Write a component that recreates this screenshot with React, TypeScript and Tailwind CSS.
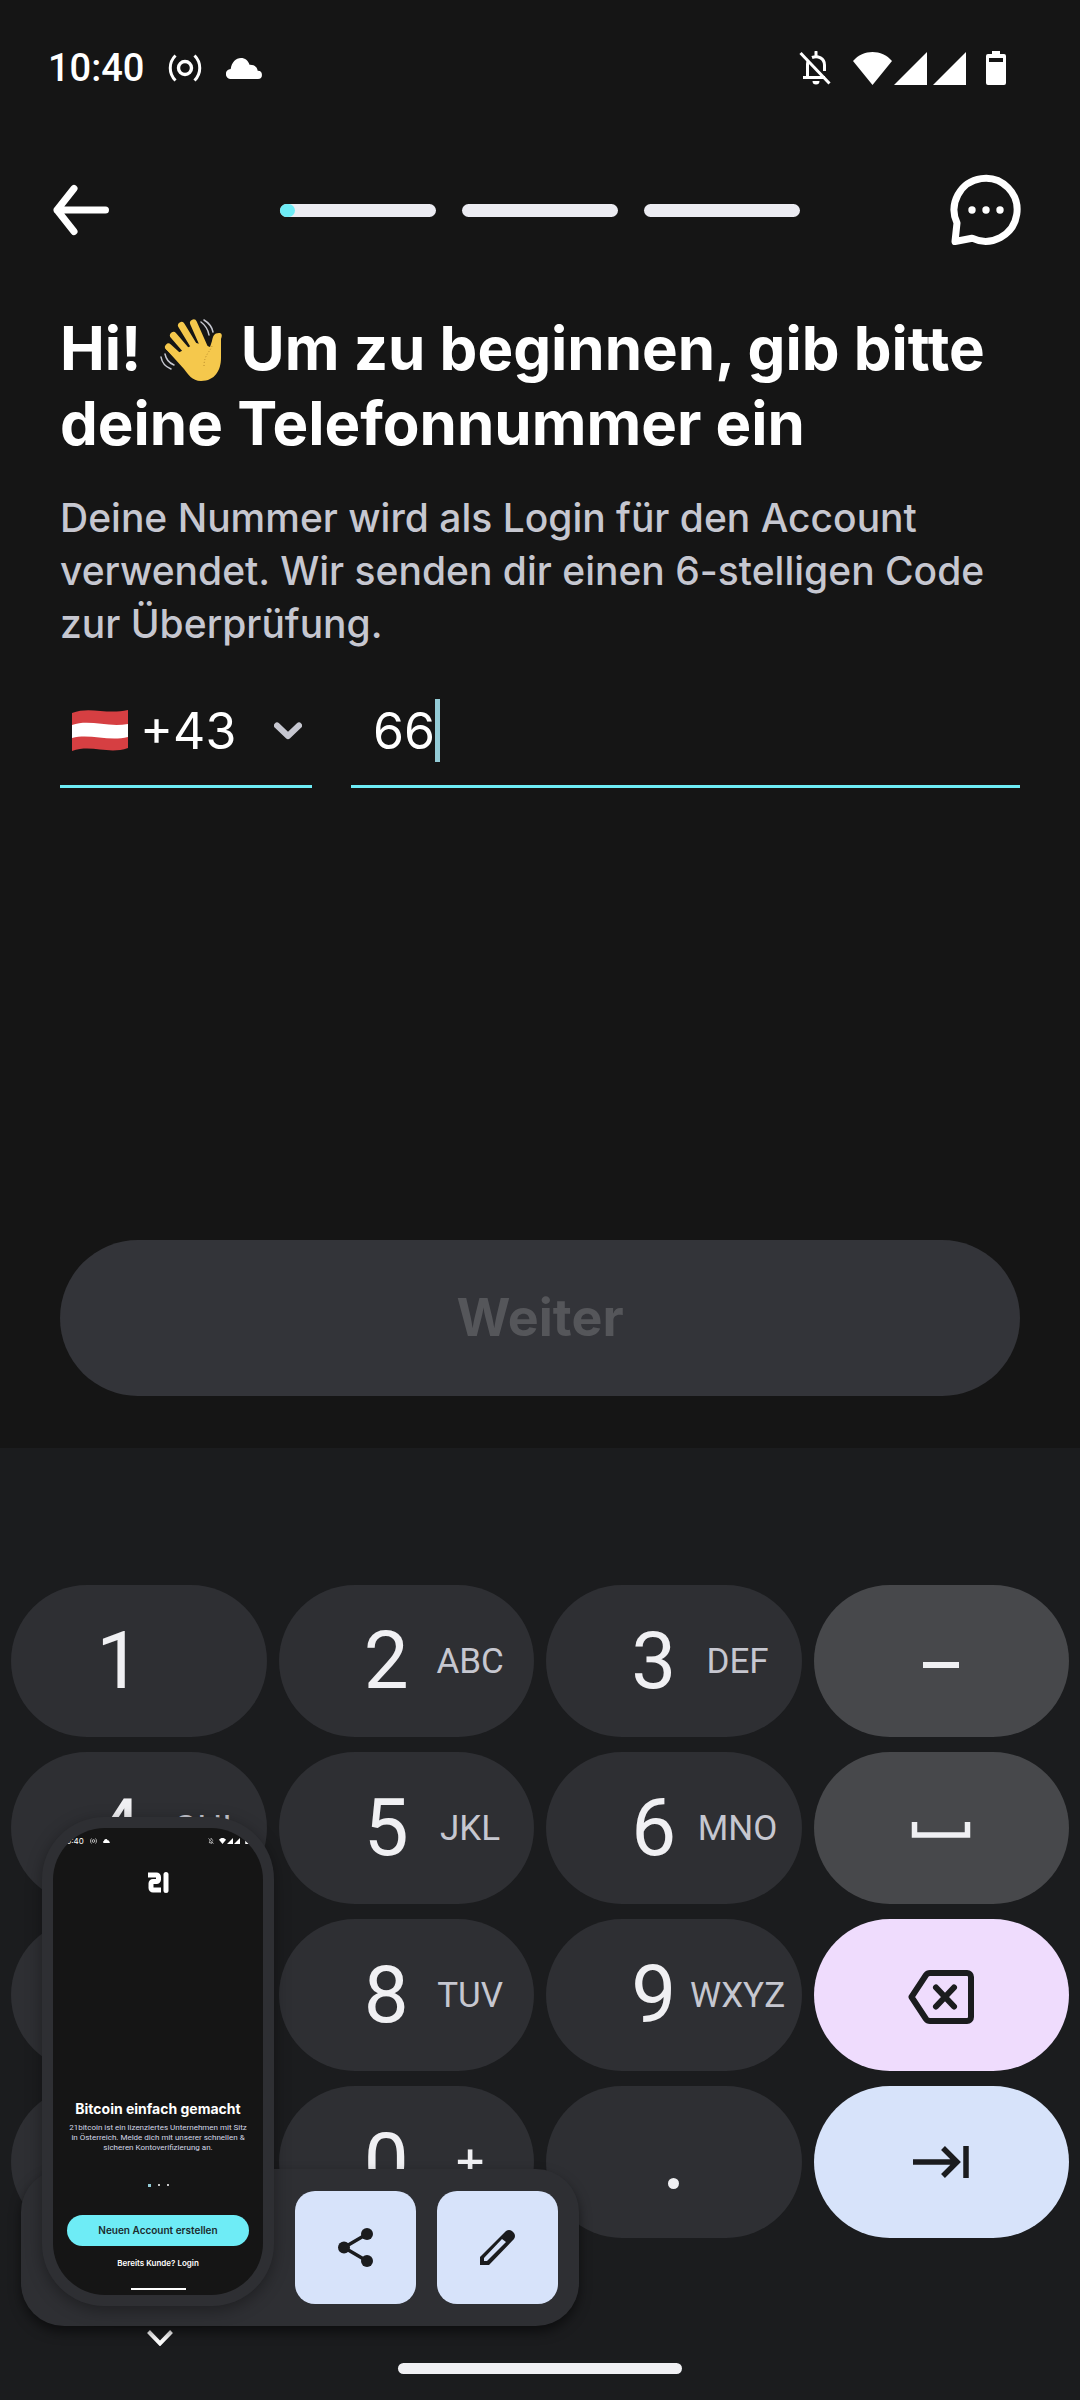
import { useState, type ReactNode } from 'react';

const FONT = "font-['Inter','Noto_Sans',sans-serif]";

interface KeyData {
  digit: string;
  letters?: string;
}

const KEY_ROWS: KeyData[][] = [
  [{ digit: '1' }, { digit: '2', letters: 'ABC' }, { digit: '3', letters: 'DEF' }],
  [{ digit: '4', letters: 'GHI' }, { digit: '5', letters: 'JKL' }, { digit: '6', letters: 'MNO' }],
  [{ digit: '' }, { digit: '8', letters: 'TUV' }, { digit: '9', letters: 'WXYZ' }],
];

function CastIcon({ className }: { className: string }) {
  return (
    <svg viewBox="0 0 34 28" className={className} fill="none" stroke="currentColor" aria-hidden="true">
      <circle cx="17" cy="14" r="6.5" strokeWidth="3.4" />
      <path d="M7.5 1.5C.5 8.500.5 19.500 7.500 26.500M26.500 1.500C33.500 8.500 33.500 19.500 26.500 26.500" strokeWidth="3" />
    </svg>
  );
}

function CloudIcon({ className }: { className: string }) {
  return (
    <svg viewBox="0 0 36 21" className={className} fill="currentColor" aria-hidden="true">
      <path d="M5 21a5 5 0 0 1-.3-10C5.500 4.500 9.800 0 15 0c4 0 7.300 2.500 8.500 6.800 4.500-.3 7.600 2.200 8.200 6A4.100 4.100 0 0 1 32 21Z" />
    </svg>
  );
}

function BellOffIcon({ className }: { className: string }) {
  return (
    <svg viewBox="0 0 32 34" className={className} fill="none" stroke="currentColor" strokeWidth="3" aria-hidden="true">
      <path d="M1.500 2 30.500 32.500" />
      <path d="M8.500 27V13.500c0-1 .2-2 .5-3M4 26.500h22M13 6.500c6-2.500 12.500 1 12.500 7.500v6" />
      <path d="M17 1v4" strokeLinecap="round" />
      <path d="M13.500 30h7a3.500 3.500 0 0 1-7 0Z" fill="currentColor" stroke="none" />
    </svg>
  );
}

function WifiIcon({ className }: { className: string }) {
  return (
    <svg viewBox="0 0 39 33" className={className} fill="currentColor" aria-hidden="true">
      <path d="M19.500 33 0 9C10-3 29-3 39 9Z" />
    </svg>
  );
}

function SignalIcon({ className }: { className: string }) {
  return (
    <svg viewBox="0 0 33 33" className={className} fill="currentColor" aria-hidden="true">
      <path d="M33 0v33H0Z" />
    </svg>
  );
}

function BatteryIcon({ className }: { className: string }) {
  return (
    <svg viewBox="0 0 20 34" className={className} fill="currentColor" aria-hidden="true">
      <path fillRule="evenodd" d="M6 0h8v3h4a2 2 0 0 1 2 2v27a2 2 0 0 1-2 2H2a2 2 0 0 1-2-2V5a2 2 0 0 1 2-2h4ZM3 7v4h14V7Z" />
    </svg>
  );
}

function WavingHand() {
  return (
    <svg viewBox="0 0 63 63" className="mx-1 inline-block size-[63px] align-[-12px]" role="img" aria-label="Winkende Hand">
      <g fill="none" stroke="#f5c84c" strokeLinecap="round" strokeWidth="7">
        <path d="M8.500 28 26 44M13.500 16.500 32 38M21.500 6.500 37 32M33.500 4 45 30" />
      </g>
      <path
        fill="#f5c84c"
        d="M5 29 24 50c4 5 8 12 17 12 14 0 20-11 20-23V20c2-5 0-6-2-6-5 0-6 3-7 8l-2 6-5-2-9-2-18 10Z"
      />
      <path d="M52 27c-2 6-8 9-8 20" fill="none" stroke="#b98c2c" strokeWidth="1" strokeDasharray="1 2" />
      <g fill="none" stroke="#c6c7d0" strokeWidth="1.500" strokeLinecap="round">
        <path d="M41 3c4 3 7 7 8 13M44 1c5 3 8 7 9 12M5 35c1 5 4 9 9 11M1 38c1 6 5 10 10 12" />
      </g>
    </svg>
  );
}

function FlagIcon() {
  return (
    <svg viewBox="0 0 56 41" className="pointer-events-none absolute left-3 h-[41px] w-14" aria-hidden="true">
      <path d="M0 3C18-4 34 5 56 0v38C36 45 20 34 0 41Z" fill="#d63f42" />
      <path d="M0 15c18-6 36 3 56-1v13c-20 5-38-4-56 1Z" fill="#fff" />
    </svg>
  );
}

function StatusBar() {
  return (
    <div className="flex h-[136px] items-center justify-between pr-[74px] pl-12">
      <div className="flex items-center">
        <time className="font-['Roboto',sans-serif] text-[38px] leading-none font-medium">10:40</time>
        <CastIcon className="ml-6 h-7 w-[34px]" />
        <CloudIcon className="ml-6 h-[21px] w-9" />
      </div>
      <div className="flex items-center">
        <BellOffIcon className="mr-[22px] h-[34px] w-8" />
        <WifiIcon className="h-[33px] w-[39px]" />
        <SignalIcon className="ml-0.5 size-[33px]" />
        <SignalIcon className="ml-1.5 size-[33px]" />
        <BatteryIcon className="ml-5 h-[34px] w-5" />
      </div>
    </div>
  );
}

function TopNav() {
  return (
    <nav className="grid h-[148px] grid-cols-[1fr_minmax(0,521px)_1fr] items-center px-[52px]">
      <button type="button" aria-label="Zurück" className="justify-self-start">
        <svg viewBox="0 0 58 52" className="h-[52px] w-[58px]" fill="none" stroke="currentColor" strokeWidth="7" strokeLinecap="round" strokeLinejoin="round">
          <path d="M22 4.500 5 26l17 21.500M5 26h48.500" />
        </svg>
      </button>
      <div className="flex gap-[26px]" role="progressbar" aria-label="Fortschritt" aria-valuenow={3} aria-valuemin={0} aria-valuemax={100}>
        <div className="h-[13px] flex-1 rounded-full bg-[#ececf2]">
          <div className="h-full w-[15px] rounded-full bg-[#6eecf6]" />
        </div>
        <div className="h-[13px] flex-1 rounded-full bg-[#ececf2]" />
        <div className="h-[13px] flex-1 rounded-full bg-[#ececf2]" />
      </div>
      <button type="button" aria-label="Chat" className="mr-1.5 justify-self-end">
        <svg viewBox="0 0 72 72" className="size-[72px]" fill="none" stroke="currentColor" strokeWidth="7" strokeLinejoin="round">
          <path d="M7 49A31.500 31.500 0 1 1 22 64.200L5 67.500Z" />
          <g fill="currentColor" stroke="none">
            <circle cx="22" cy="36" r="3.700" />
            <circle cx="36" cy="36" r="3.700" />
            <circle cx="50" cy="36" r="3.700" />
          </g>
        </svg>
      </button>
    </nav>
  );
}

function PhoneForm() {
  const [phone, setPhone] = useState('66');

  return (
    <div className="mt-[26px] flex gap-[39px] text-[50px] leading-[64px]">
      <div className="relative flex h-[112px] w-[252px] items-center border-b-[3px] border-[#6eecf6]">
        <FlagIcon />
        <select aria-label="Ländervorwahl" className="h-full w-full appearance-none bg-transparent pl-20 outline-none">
          <option>+43</option>
        </select>
        <svg viewBox="0 0 28 18" className="pointer-events-none absolute right-2.5 h-[18px] w-7 text-[#c6c7d0]" fill="none" stroke="currentColor" strokeWidth="6" strokeLinecap="round" strokeLinejoin="round" aria-hidden="true">
          <path d="M3 3.500 14 14 25 3.500" />
        </svg>
      </div>
      <div className="flex h-[112px] flex-1 items-center border-b-[3px] border-[#6eecf6] pl-[22px]">
        <input
          type="tel"
          aria-label="Telefonnummer"
          value={phone}
          onChange={(e) => setPhone(e.target.value)}
          className="field-sizing-content h-full bg-transparent caret-transparent outline-none"
        />
        <span className="h-[63px] w-[5px] bg-[#93cbd6]" />
      </div>
    </div>
  );
}

function Key({ data }: { data: KeyData }) {
  const symbol = data.letters === '+';
  return (
    <button type="button" className="grid h-[152px] grid-cols-[74fr_68fr_100fr_14fr] items-center rounded-full bg-[#2e2f33] text-center">
      <span className="col-start-2 text-[80px] leading-none text-[#f0f0f3]">{data.digit}</span>
      <span className={`flex justify-center leading-none ${symbol ? 'text-[50px] text-[#f0f0f3]' : 'text-[35px] text-[#c6c7d0]'}`}>
        {data.letters}
      </span>
    </button>
  );
}

function SideKey({ label, color, children }: { label: string; color: string; children: ReactNode }) {
  return (
    <button type="button" aria-label={label} className={`flex h-[152px] items-center justify-center rounded-full ${color}`}>
      {children}
    </button>
  );
}

function Keypad() {
  return (
    <div className="grid grid-cols-4 gap-x-3 gap-y-[15px] px-[11px] font-['Roboto',sans-serif]">
      {KEY_ROWS[0].map((k, i) => <Key key={i} data={k} />)}
      <SideKey label="Minus" color="bg-[#47484b] text-[#f0f0f3]">
        <svg viewBox="0 0 60 16" className="mt-2 h-4 w-[60px]" fill="currentColor">
          <path d="M12 5h36v6H12Z" />
        </svg>
      </SideKey>

      {KEY_ROWS[1].map((k, i) => <Key key={i} data={k} />)}
      <SideKey label="Leerzeichen" color="bg-[#47484b] text-[#f0f0f3]">
        <svg viewBox="0 0 60 16" className="mt-1 h-4 w-[60px]" fill="none" stroke="currentColor" strokeWidth="5.500">
          <path d="M3.500 0v13h53V0" />
        </svg>
      </SideKey>

      {KEY_ROWS[2].map((k, i) => <Key key={i} data={k} />)}
      <SideKey label="Löschen" color="bg-[#efdcfd] text-[#1b1c1e]">
        <svg viewBox="0 0 66 54" className="mt-1 h-[54px] w-[66px]" fill="none" stroke="currentColor" strokeWidth="6" strokeLinejoin="round" strokeLinecap="round">
          <path d="M22 3h37a4 4 0 0 1 4 4v40a4 4 0 0 1-4 4H22a5 5 0 0 1-4-2L3.500 27 18 5a5 5 0 0 1 4-2Z" />
          <path d="m28 17.500 18 19M46 17.500l-18 19" />
        </svg>
      </SideKey>

      <Key data={{ digit: '' }} />
      <Key data={{ digit: '0', letters: '+' }} />
      <button type="button" aria-label="Punkt" className="flex h-[152px] items-center justify-center rounded-full bg-[#2e2f33] pt-[42px]">
        <span className="size-[11px] rounded-full bg-[#f0f0f3]" />
      </button>
      <SideKey label="Nächstes Feld" color="bg-[#d7e3fa] text-[#1b1c1e]">
        <svg viewBox="0 0 56 32" className="h-8 w-14" fill="none" stroke="currentColor" strokeWidth="5.500">
          <path d="M0 16h44M30 2l14 14-14 14M53 0v32" />
        </svg>
      </SideKey>
    </div>
  );
}

function Preview() {
  return (
    <div className="flex h-[467px] flex-col items-center overflow-hidden rounded-[52px] bg-[#151515] text-center">
      <div className="flex h-[26px] w-full items-center justify-between pr-3.5 pl-2.5 text-[8px]">
        <div className="flex items-center gap-1.5">
          <span>10:40</span>
          <CastIcon className="h-1.5 w-[7px]" />
          <CloudIcon className="h-1 w-[7px]" />
        </div>
        <div className="flex items-center gap-px">
          <BellOffIcon className="mr-1 h-1.5 w-1.5" />
          <WifiIcon className="h-1.5 w-[7px]" />
          <SignalIcon className="size-1.5" />
          <SignalIcon className="size-1.5" />
          <BatteryIcon className="ml-1 h-1.5 w-1" />
        </div>
      </div>
      <svg viewBox="0 0 21 21" className="mt-[18px] size-[21px] shrink-0" fill="none" stroke="#fff" role="img" aria-label="21bitcoin">
        <path d="M0 3h8.500a2 2 0 0 1 2 2v2.500a2 2 0 0 1-2 2H5a2 2 0 0 0-2 2V16a2 2 0 0 0 2 2h8" strokeWidth="5" />
        <path d="M18 2.500v16" strokeWidth="5" strokeLinecap="round" />
      </svg>
      <h2 className="mt-[206px] text-[14px] leading-5 font-bold">Bitcoin einfach gemacht</h2>
      <p className="mt-1 font-['Roboto',sans-serif] text-[8px] leading-[10px] whitespace-nowrap text-[#d3d7e6]">
        21bitcoin ist ein lizenziertes Unternehmen mit Sitz<br />
        in Österreich. Melde dich mit unserer schnellen &amp;<br />
        sicheren Kontoverifizierung an.
      </p>
      <div className="mt-[30px] flex h-1 items-center gap-[7px]">
        <span className="size-[3px] bg-[#93cbd6]" />
        <span className="size-0.5 rounded-full bg-white" />
        <span className="size-0.5 rounded-full bg-white" />
      </div>
      <a href="#account" className="mt-7 flex h-[31px] w-[182px] items-center justify-center rounded-full bg-[#6eecf6] text-[10px] font-semibold text-[#1b2b2e]">
        Neuen Account erstellen
      </a>
      <a href="#login" className="mt-3 text-[8px] leading-[10px] font-semibold">Bereits Kunde? Login</a>
      <div className="mt-5 h-0.5 w-[55px] shrink-0 bg-white" />
    </div>
  );
}

function ScreenshotOverlay() {
  return (
    <div className="absolute bottom-[74px] left-[21px] flex h-[157px] w-[558px] items-center justify-end gap-[21px] rounded-[43px] bg-[#2e2f33] pr-[21px] shadow-[0_6px_12px_rgba(0,0,0,0.5)]">
      <div className="absolute bottom-5 left-[21px] w-[232px] rounded-[62px] bg-[#2e2f33] p-[11px] shadow-[0_4px_16px_rgba(0,0,0,0.35)]">
        <Preview />
      </div>
      <button type="button" aria-label="Teilen" className="flex h-[113px] w-[121px] items-center justify-center rounded-[20px] bg-[#d7e3fa] text-[#1b1c1e]">
        <svg viewBox="0 0 35 39" className="h-[39px] w-[35px]" fill="currentColor">
          <path d="M29 6 6 19.500 29 33" fill="none" stroke="currentColor" strokeWidth="3.500" />
          <circle cx="29" cy="6" r="6" />
          <circle cx="6" cy="19.500" r="6" />
          <circle cx="29" cy="33" r="6" />
        </svg>
      </button>
      <button type="button" aria-label="Bearbeiten" className="flex h-[113px] w-[121px] items-center justify-center rounded-[20px] bg-[#d7e3fa] text-[#1b1c1e]">
        <svg viewBox="0 0 35 35" className="size-[35px]" fill="currentColor">
          <path fillRule="evenodd" d="M0 27 26 1q3-2 6 0l2 2q2 3 0 6L9 35H0ZM4 28v3h3L26 12 22 9Z" />
        </svg>
      </button>
    </div>
  );
}

export default function App() {
  return (
    <div className={`flex min-h-screen flex-col bg-[#151515] text-white ${FONT}`}>
      <StatusBar />
      <TopNav />
      <main className="flex flex-1 flex-col px-[60px] pt-[27px] pb-[52px]">
        <h1 className="text-[60px] leading-[75px] font-bold">
          Hi! <WavingHand /> Um zu beginnen, gib bitte<br />
          deine Telefonnummer ein
        </h1>
        <p className="mt-[30px] text-[39px] leading-[53px] font-medium text-[#c6c7d0]">
          Deine Nummer wird als Login für den Account<br />
          verwendet. Wir senden dir einen 6-stelligen Code<br />
          zur Überprüfung.
        </p>
        <PhoneForm />
        <button type="button" disabled className="mt-auto h-[156px] rounded-full bg-[#333439] text-[52px] font-bold text-[#55565a]">
          Weiter
        </button>
      </main>
      <section className="relative bg-[#1b1c1e] pt-[137px]" aria-label="Tastatur">
        <Keypad />
        <ScreenshotOverlay />
        <div className="grid h-[162px] grid-cols-3 items-end justify-items-center pb-[26px]">
          <button type="button" aria-label="Tastatur schließen" className="mr-10 mb-7">
            <svg viewBox="0 0 26 16" className="h-4 w-[26px]" fill="none" stroke="currentColor" strokeWidth="4">
              <path d="m1.500 1.500 11.500 12 11.500-12" />
            </svg>
          </button>
          <div className="h-[11px] w-[284px] rounded-full bg-[#f0f0f3]" />
        </div>
      </section>
    </div>
  );
}
